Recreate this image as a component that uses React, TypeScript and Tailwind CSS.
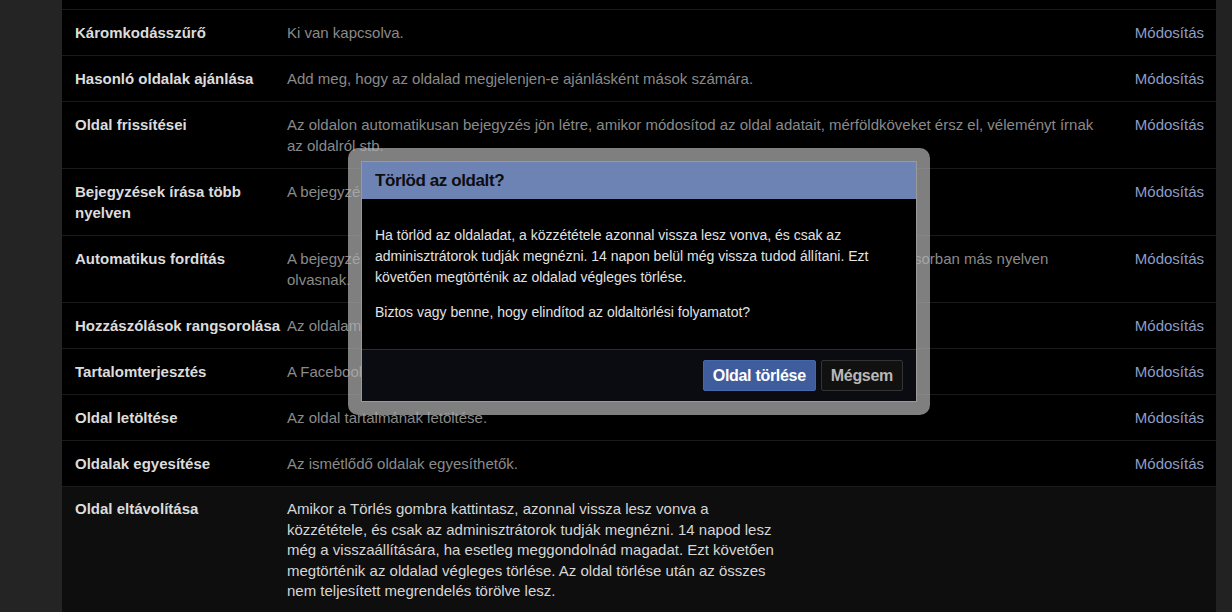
import React from 'react';

type Row = {
  label: string;
  text: React.ReactNode;
};

const rows: Row[] = [
  { label: 'Káromkodásszűrő', text: 'Ki van kapcsolva.' },
  { label: 'Hasonló oldalak ajánlása', text: 'Add meg, hogy az oldalad megjelenjen-e ajánlásként mások számára.' },
  {
    label: 'Oldal frissítései',
    text: 'Az oldalon automatikusan bejegyzés jön létre, amikor módosítod az oldal adatait, mérföldköveket érsz el, véleményt írnak az oldalról stb.',
  },
  { label: 'Bejegyzések írása több nyelven', text: 'A bejegyzések több nyelven is megírhatók.' },
  {
    label: 'Automatikus fordítás',
    text: (
      <>
        A bejegyzések automatikusan le lesznek fordítva azok számára, akik az oldalad nyelvét is elsősorban más nyelven
        <br />
        olvasnak.
      </>
    ),
  },
  { label: 'Hozzászólások rangsorolása', text: 'Az oldalamon a legrelevánsabb hozzászólások jelenjenek meg.' },
  { label: 'Tartalomterjesztés', text: 'A Facebookon engedélyezett a tartalom letöltése.' },
  { label: 'Oldal letöltése', text: 'Az oldal tartalmának letöltése.' },
  { label: 'Oldalak egyesítése', text: 'Az ismétlődő oldalak egyesíthetők.' },
];

function SettingRow({ row }: { row: Row }) {
  return (
    <div className="flex border-b border-[#1a1a1a] py-3 pl-[13px] pr-3 leading-[21px]">
      <div className="w-[212px] shrink-0 pr-[3px] font-bold text-[#dcdcdc]">{row.label}</div>
      <div className="w-[832px] shrink-0 pr-2 text-[#8a8a8a]">{row.text}</div>
      <div className="flex-1 text-right text-[#8e9dc6]">Módosítás</div>
    </div>
  );
}

function DeleteDialog() {
  return (
    <div className="absolute left-1/2 top-[148px] w-[582px] -translate-x-1/2 rounded-[10px] bg-[rgba(174,174,174,0.73)] p-[13px]">
      <div className="border border-[#9a9a9a] bg-black">
        <div className="flex h-[37px] items-center bg-[#6d83b3] px-[13px]">
          <h2 className="text-[17px] font-bold tracking-[-0.4px] text-[#0d0d14]">Törlöd az oldalt?</h2>
        </div>
        <div className="px-[13px] pt-[26px] pb-[26px] text-[14px] leading-[21px] text-[#e2e2e2]">
          <p>
            Ha törlöd az oldaladat, a közzététele azonnal vissza lesz vonva, és csak az adminisztrátorok tudják
            megnézni. 14 napon belül még vissza tudod állítani. Ezt követően megtörténik az oldalad végleges
            törlése.
          </p>
          <p className="mt-[14px]">Biztos vagy benne, hogy elindítod az oldaltörlési folyamatot?</p>
        </div>
        <div className="flex justify-end gap-[5px] border-t border-[#2e2e2e] bg-[#0b0c12] px-[13px] pt-[10px] pb-[10px]">
          <button className="h-[31px] rounded-[2px] border border-[#4667a8] bg-[#3f5d9c] px-[9px] text-[16px] font-bold tracking-[-0.3px] text-white">
            Oldal törlése
          </button>
          <button className="h-[31px] rounded-[2px] border border-[#333] bg-[#111] px-[9px] text-[16px] font-bold tracking-[-0.3px] text-[#b8b8b8]">
            Mégsem
          </button>
        </div>
      </div>
    </div>
  );
}

export default function App() {
  return (
    <div
      className="flex h-[612px] w-full overflow-hidden bg-[#232323] text-[15px]"
      style={{ fontFamily: '"Liberation Sans", Arial, sans-serif' }}
    >
      <div className="w-[62px] shrink-0 bg-[#242424]" />
      <div className="relative flex w-[1154px] shrink-0 flex-col bg-black">
        <div className="h-[10px] shrink-0 border-b border-[#1a1a1a]" />
        {rows.map((row) => (
          <SettingRow key={row.label} row={row} />
        ))}
        <div className="flex flex-1 bg-[#0e0e0e] py-3 pl-[13px] pr-3 leading-[20.5px]">
          <div className="w-[212px] shrink-0 pr-[3px] font-bold text-[#dcdcdc]">Oldal eltávolítása</div>
          <div className="w-[496px] shrink-0 text-[#d6d6d6]">
            Amikor a Törlés gombra kattintasz, azonnal vissza lesz vonva a közzététele, és csak az adminisztrátorok
            tudják megnézni. 14 napod lesz még a visszaállítására, ha esetleg meggondolnád magadat. Ezt követően
            megtörténik az oldalad végleges törlése. Az oldal törlése után az összes nem teljesített megrendelés
            törölve lesz.
          </div>
        </div>
        <DeleteDialog />
      </div>
      <div className="flex-1 bg-[#222]" />
    </div>
  );
}
